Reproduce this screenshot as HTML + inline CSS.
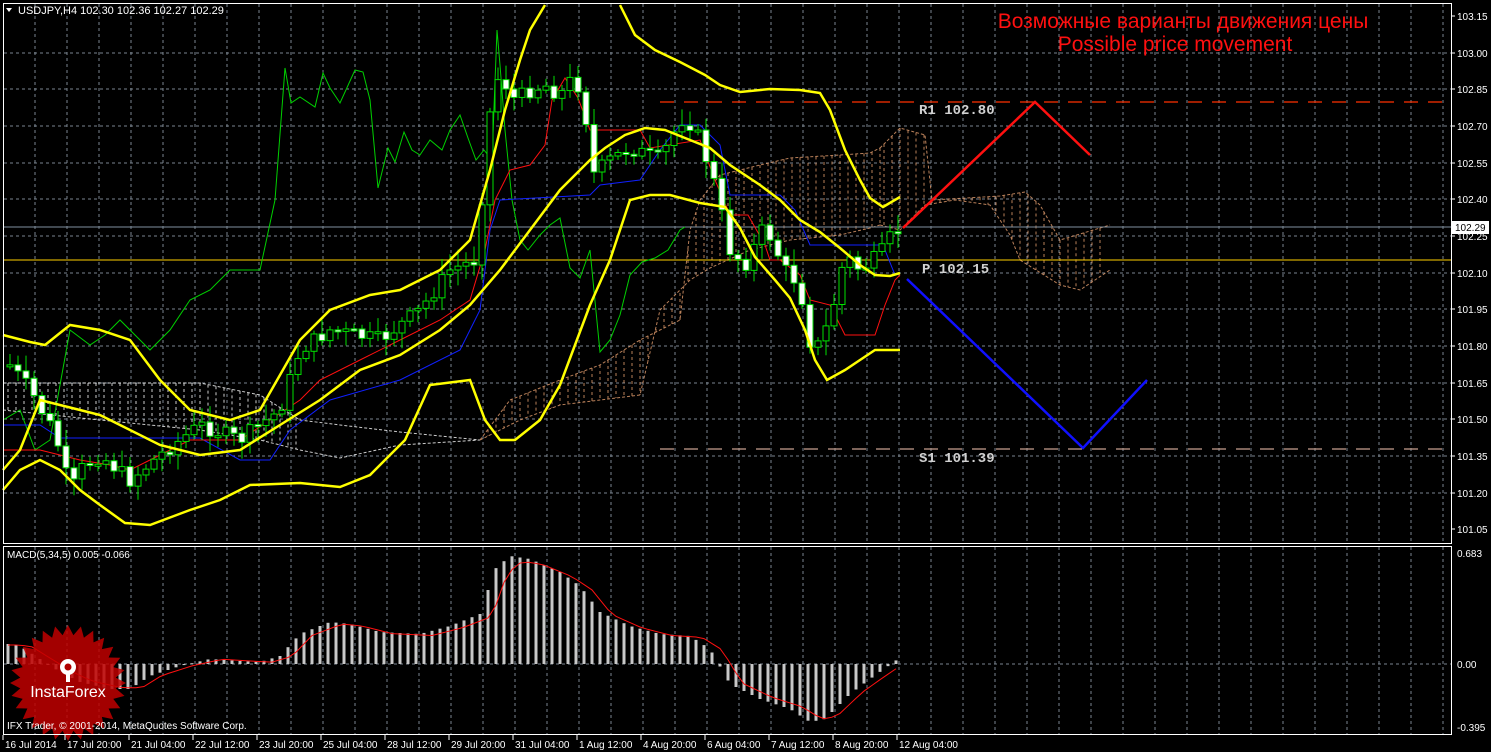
<!DOCTYPE html>
<html><head><meta charset="utf-8"><style>
html,body{margin:0;padding:0;background:#000;width:1491px;height:752px;overflow:hidden}
svg{display:block}
text{font-family:"Liberation Sans",sans-serif}
text.m{font-family:"Liberation Mono",monospace;font-weight:bold}
</style></head><body>
<svg id="s" width="1491" height="752" xmlns="http://www.w3.org/2000/svg">
<rect width="1491" height="752" fill="#000"/>
<g id="grid"></g>
<g id="cloud" opacity="0.8"></g>
<line x1="3" y1="227" x2="1451" y2="227" stroke="#8090a0" stroke-width="1"/>
<line x1="3" y1="260" x2="1451" y2="260" stroke="#ffd000" stroke-width="1"/>
<line x1="660" y1="102" x2="1446" y2="102" stroke="#ff3000" stroke-width="1.2" stroke-dasharray="14,10"/>
<line x1="660" y1="449" x2="1446" y2="449" stroke="#c8a090" stroke-width="1.2" stroke-dasharray="14,10"/>
<g font-size="14" fill="#d0d0d0">
<text class="m" x="919" y="114">R1  102.80</text>
<text class="m" x="922" y="273">P  102.15</text>
<text class="m" x="919" y="462">S1  101.39</text>
</g>
<polyline fill="none" stroke="#00d000" stroke-width="1" points="3,420 20,410 35,450 50,440 70,330 90,345 105,335 120,320 135,335 150,350 170,330 190,300 210,290 230,270 260,270 275,200 285,68 291,103 300,97 315,107 323,73 330,88 340,103 355,70 363,72 370,100 378,188 388,148 395,162 404,132 412,150 420,155 430,140 442,150 450,130 460,115 468,138 476,160 484,150 492,160 497,30 500,65 505,130 512,200 520,240 528,250 540,235 550,225 560,218 570,268 580,278 590,250 600,352 610,340 620,315 630,275 642,262 655,258 668,250 680,230 685,227"/>
<polyline fill="none" stroke="#1020ff" stroke-width="1" points="3,425 40,425 60,438 200,438 240,460 270,460 290,430 330,400 400,380 460,350 480,310 490,230 500,200 590,195 600,185 640,180 660,150 680,125 700,125 720,145 730,195 780,195 795,210 810,245 850,245 880,245 885,250 895,275"/>
<polyline fill="none" stroke="#ff1010" stroke-width="1" points="3,450 40,450 80,460 110,465 130,470 160,455 190,440 240,440 270,420 300,400 320,380 360,360 400,340 440,320 470,300 485,250 495,200 510,170 530,165 545,145 552,100 565,78 578,98 590,130 640,130 650,148 700,140 715,180 730,215 748,215 765,245 770,260 780,260 800,275 810,300 830,305 845,335 875,335 885,305 895,280 900,275"/>
<g id="candles"></g>
<g fill="none" stroke="#ffff00" stroke-width="2.5">
<polyline points="3,335 30,342 45,345 70,325 100,330 130,340 160,380 190,410 230,420 260,410 300,340 330,310 370,295 400,290 440,270 470,240 490,170 505,110 520,60 530,30 545,5"/>
<polyline points="620,5 635,35 655,50 680,62 705,75 720,85 740,92 770,89 800,90 820,93 830,110 845,150 860,180 870,198 883,207 900,197"/>
<polyline points="3,470 20,450 40,400 60,405 80,410 100,415 120,425 160,445 200,455 240,450 280,425 320,400 360,370 400,355 440,330 470,305 500,270 530,230 560,190 590,160 605,148 625,135 645,128 665,130 690,140 710,148 730,165 760,185 780,200 800,220 820,232 840,248 860,265 875,275 890,276 900,273"/>
<polyline points="3,490 20,470 40,460 60,470 80,490 100,505 125,523 150,525 190,510 220,500 250,485 300,483 340,487 370,475 390,455 405,440 430,385 470,380 485,420 500,440 515,440 540,420 560,385 575,345 590,305 610,260 630,200 650,195 670,195 700,203 725,207 740,228 755,257 775,280 790,298 805,330 815,360 827,380 845,370 860,360 875,350 900,350"/>
</g>
<polyline points="903,228 1035,102 1090,155" fill="none" stroke="#ff1010" stroke-width="2.5"/>
<polyline points="907,279 1083,448 1147,380" fill="none" stroke="#1010ff" stroke-width="2.5"/>
<text x="1183" y="28" text-anchor="middle" font-size="21" fill="#ff1010">Возможные варианты движения цены</text>
<text x="1175" y="51" text-anchor="middle" font-size="21" fill="#ff1010">Possible price movement</text>
<polygon points="6,8 12,8 9,12" fill="#fff"/>
<text x="18" y="14" font-size="11" fill="#fff">USDJPY,H4  102.30 102.36 102.27 102.29</text>
<g id="macd"></g>
<text x="7" y="558" font-size="10" fill="#fff">MACD(5,34,5) 0.005 -0.066</text>
<g opacity="0.85">
<polygon id="star" fill="#c00000"/>
</g>
<g fill="#fff">
<circle cx="68" cy="667" r="8"/>
<circle cx="68" cy="667" r="3.5" fill="#b00000"/>
<rect x="66" y="672" width="4" height="10"/>
</g>
<text x="68" y="697" text-anchor="middle" font-size="16" fill="#fff">InstaForex</text>
<text x="7" y="729" font-size="10" fill="#fff">IFX Trader, © 2001-2014, MetaQuotes Software Corp.</text>
<rect x="3.5" y="3.5" width="1448" height="540" fill="none" stroke="#fff"/>
<rect x="3.5" y="546.5" width="1448" height="188" fill="none" stroke="#fff"/>
<g id="axis" font-size="10" fill="#fff"></g>
<rect x="1452" y="221" width="37" height="13" fill="#fff"/>
<text x="1455" y="231" font-size="10" fill="#000">102.29</text>
</svg>
<script>
var NS="http://www.w3.org/2000/svg";
function el(p,t,a,tx){var e=document.createElementNS(NS,t);for(var k in a)e.setAttribute(k,a[k]);if(tx!=null)e.textContent=tx;document.getElementById(p).appendChild(e);return e;}
for(var x=35;x<1451;x+=32){el('grid','line',{x1:x,y1:4,x2:x,y2:543,stroke:'#7a8590','stroke-dasharray':'3,3'});el('grid','line',{x1:x,y1:547,x2:x,y2:734,stroke:'#7a8590','stroke-dasharray':'3,3'});}
var prices=["103.15","103.00","102.85","102.70","102.55","102.40","102.25","102.10","101.95","101.80","101.65","101.50","101.35","101.20","101.05"];
for(var i=0;i<15;i++){var y=Math.round(16+i*36.67);if(i>0&&i<14)el('grid','line',{x1:4,y1:y,x2:1451,y2:y,stroke:'#7a8590','stroke-dasharray':'3,3'});
el('axis','line',{x1:1451,y1:y,x2:1455,y2:y,stroke:'#fff'});el('axis','text',{x:1457,y:y+4},prices[i]);}
el('grid','line',{x1:4,y1:664,x2:1451,y2:664,stroke:'#7a8590','stroke-dasharray':'3,3'});
el('axis','text',{x:1457,y:557},'0.683');el('axis','text',{x:1457,y:668},'0.00');el('axis','text',{x:1457,y:731},'-0.395');
var tl=[[5,"16 Jul 2014"],[67,"17 Jul 20:00"],[131,"21 Jul 04:00"],[195,"22 Jul 12:00"],[259,"23 Jul 20:00"],[323,"25 Jul 04:00"],[387,"28 Jul 12:00"],[451,"29 Jul 20:00"],[515,"31 Jul 04:00"],[579,"1 Aug 12:00"],[643,"4 Aug 20:00"],[707,"6 Aug 04:00"],[771,"7 Aug 12:00"],[835,"8 Aug 20:00"],[899,"12 Aug 04:00"]];
tl.forEach(function(t){el('axis','line',{x1:t[0]-2,y1:735,x2:t[0]-2,y2:740,stroke:'#fff'});el('axis','text',{x:t[0],y:748},t[1]);});
function interp(pts,x){for(var i=0;i<pts.length-1;i++){if(x>=pts[i][0]&&x<=pts[i+1][0]){var t=(x-pts[i][0])/(pts[i+1][0]-pts[i][0]);return pts[i][1]+t*(pts[i+1][1]-pts[i][1]);}}return x<pts[0][0]?pts[0][1]:pts[pts.length-1][1];}
function hatch(top,bot,x0,x1,col){for(var x=x0;x<=x1;x+=8){var a=interp(top,x),b=interp(bot,x);el('cloud','line',{x1:x,y1:a,x2:x,y2:b,stroke:col,'stroke-dasharray':'3,3','stroke-width':1});}
el('cloud','polyline',{points:top.map(function(p){return p.join(',')}).join(' '),fill:'none',stroke:col,'stroke-dasharray':'3,2'});
el('cloud','polyline',{points:bot.map(function(p){return p.join(',')}).join(' '),fill:'none',stroke:col,'stroke-dasharray':'3,2'});}
hatch([[3,383],[200,383],[260,395],[300,420],[340,425],[400,432],[480,440]],[[3,410],[100,420],[200,430],[260,440],[300,450],[340,458],[400,445],[480,440]],8,300,'#ffffff');
hatch([[480,440],[510,400],[560,380],[600,365],[640,340],[680,320],[690,230],[700,200],[720,175],[760,165],[790,158],[840,155],[870,153],[880,148]],[[480,440],[520,420],[560,405],[600,400],[640,395],[660,310],[690,280],[710,268],[750,250],[790,240],[840,235],[870,228],[880,225]],488,880,'#e8a070');
hatch([[880,148],[900,128],[925,135],[932,200],[950,199],[1000,196],[1025,192],[1040,205],[1060,240],[1110,225]],[[880,225],[900,230],[925,205],[955,200],[990,205],[1010,235],[1020,260],[1060,285],[1080,290],[1095,280],[1110,270]],884,1105,'#e8a070');
var kp=[[10,365],[30,390],[50,425],[62,455],[70,495],[80,470],[100,455],[130,480],[160,455],[200,425],[240,440],[280,410],[300,350],[330,330],[380,340],[420,310],[450,270],[475,260],[485,170],[492,90],[500,75],[515,100],[530,90],[545,85],[560,95],[575,75],[585,110],[592,175],[610,160],[630,148],[660,160],[675,130],[685,115],[700,140],[715,185],[730,250],[745,265],[765,225],[785,270],[800,285],[808,340],[818,345],[830,320],[845,255],[860,270],[880,255],[895,230]];
var prev=interp(kp,2),seed=7;function rnd(){seed=(seed*9301+49297)%233280;return seed/233280;}
for(var x=10;x<=898;x+=8){var c=interp(kp,x)+(rnd()-0.5)*16,o=prev;var hi=Math.min(o,c)-3-rnd()*14,lo=Math.max(o,c)+3+rnd()*14;
el('candles','line',{x1:x,y1:hi,x2:x,y2:lo,stroke:'#00e000'});var t=Math.min(o,c),h=Math.max(Math.abs(o-c),2);
el('candles','rect',{x:x-3,y:t,width:6,height:h,fill:(c<o?'#000':'#fff'),stroke:'#00e000','stroke-width':1});prev=c;}
var mk=[[8,-20],[20,-18],[40,-5],[60,8],[80,18],[110,25],[130,25],[150,12],[180,2],[210,-5],[240,-3],[260,-2],[280,-8],[300,-30],[330,-42],[350,-40],[380,-32],[420,-30],[450,-38],[480,-50],[495,-95],[510,-108],[530,-105],[560,-92],[580,-78],[600,-52],[630,-38],[660,-30],[690,-28],[710,-15],[730,20],[760,35],[790,45],[810,58],[825,55],[850,30],[870,15],[898,-5]];
var sg=[];for(var x=8;x<=898;x+=8){var v=interp(mk,x);var y0=664,y1=664+v;el('macd','rect',{x:x-1.5,y:Math.min(y0,y1),width:3,height:Math.max(Math.abs(v),1),fill:'#c8c8c8'});sg.push([x,interp(mk,x-12)*0.95]);}
el('macd','polyline',{points:sg.map(function(p){return p[0]+','+(664+p[1])}).join(' '),fill:'none',stroke:'#ff1010'});
var pts=[],n=28;for(var i=0;i<2*n;i++){var r=i%2?48:58,a=Math.PI*i/n;pts.push((68+r*Math.cos(a)).toFixed(1)+','+(683+r*Math.sin(a)).toFixed(1));}
document.getElementById('star').setAttribute('points',pts.join(' '));
</script>
</body></html>
